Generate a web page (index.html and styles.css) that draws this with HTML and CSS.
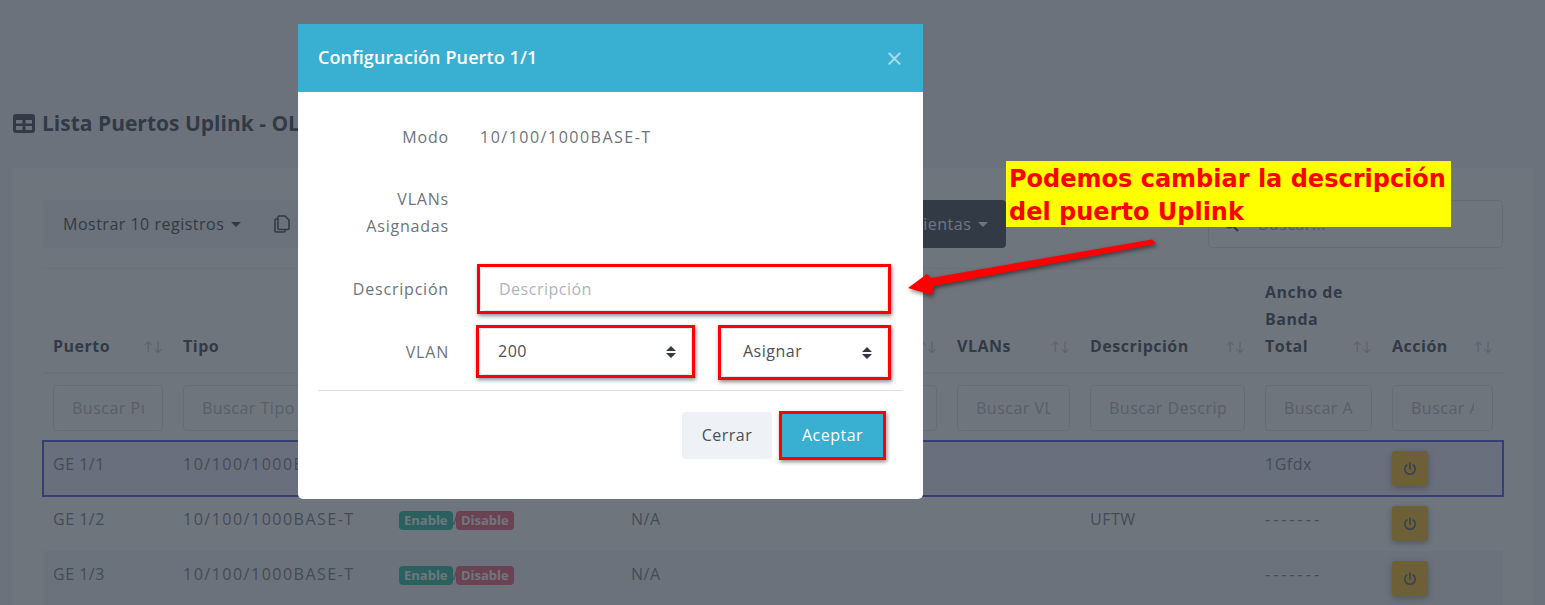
FILE: index.html
```html
<!DOCTYPE html>
<html lang="es">
<head>
  <meta charset="UTF-8">
  <title>Lista Puertos Uplink</title>
  <link rel="stylesheet" href="styles.css">
</head>
<body>
  <div class="page">
    <h4 class="page-title">
      <svg class="title-icon" viewBox="0 0 22 19"><path fill-rule="evenodd" d="M3 0h16a3 3 0 0 1 3 3v13a3 3 0 0 1-3 3H3a3 3 0 0 1-3-3V3a3 3 0 0 1 3-3zM3 6v3.500h6.500V6zm9.500 0v3.500H19V6zM3 12v4h6.500v-4zm9.500 0v4H19v-4z"/></svg>
      Lista Puertos Uplink - OLT 1
    </h4>

    <div class="card">
      <div class="toolbar">
        <div class="btn-group">
          <button class="tool-btn tool-length">Mostrar 10 registros <span class="caret"></span></button>
          <button class="tool-btn tool-icon">
            <svg viewBox="0 0 16 18" width="16" height="18" fill="none" stroke="currentColor" stroke-width="1.600"><path d="M5 1h6l4 4v8.500a1 1 0 0 1-1 1H5a1 1 0 0 1-1-1V2a1 1 0 0 1 1-1z"/><path d="M4 4H2a1 1 0 0 0-1 1v11a1 1 0 0 0 1 1h8a1 1 0 0 0 1-1v-1.500"/></svg>
          </button>
          <div class="tool-fill"></div>
          <button class="tool-btn tool-dark">Herramientas <span class="caret"></span></button>
        </div>
        <div class="search-box">
          <svg viewBox="0 0 16 16" width="16" height="16" fill="none" stroke="currentColor" stroke-width="2.200"><circle cx="6.500" cy="6.500" r="5"/><path d="M10.500 10.500L15 15"/></svg>
          <span>Buscar...</span>
        </div>
      </div>

      <table class="ports">
        <colgroup>
          <col class="c-puerto"><col class="c-tipo"><col class="c-estado"><col class="c-modo">
          <col class="c-vlans"><col class="c-desc"><col class="c-ancho"><col class="c-accion">
        </colgroup>
        <thead>
          <tr>
            <th><div class="th-in">Puerto <span class="sort">↑↓</span></div></th>
            <th><div class="th-in">Tipo <span class="sort">↑↓</span></div></th>
            <th><div class="th-in"><span></span> <span class="sort">↑↓</span></div></th>
            <th><div class="th-in"><span></span> <span class="sort">↑↓</span></div></th>
            <th><div class="th-in">VLANs <span class="sort">↑↓</span></div></th>
            <th><div class="th-in">Descripción <span class="sort">↑↓</span></div></th>
            <th><div class="th-in"><span>Ancho de<br>Banda<br>Total</span> <span class="sort">↑↓</span></div></th>
            <th><div class="th-in">Acción <span class="sort">↑↓</span></div></th>
          </tr>
          <tr class="filters">
            <td><input placeholder="Buscar Puerto"></td>
            <td><input placeholder="Buscar Tipo"></td>
            <td><input></td>
            <td><input></td>
            <td><input placeholder="Buscar VLANs"></td>
            <td><input placeholder="Buscar Descripción"></td>
            <td><input placeholder="Buscar Ancho"></td>
            <td><input placeholder="Buscar Acción"></td>
          </tr>
        </thead>
        <tbody>
          <tr class="selected">
            <td>GE 1/1</td>
            <td class="wide-num">10/100/1000BASE-T</td>
            <td></td>
            <td></td>
            <td></td>
            <td></td>
            <td>1Gfdx</td>
            <td><button class="power"><svg viewBox="0 0 14 14" width="14" height="14" fill="none" stroke="currentColor" stroke-width="1.600" stroke-linecap="round"><path d="M7 1v6"/><path d="M3.800 3a5.200 5.200 0 1 0 6.400 0"/></svg></button></td>
          </tr>
          <tr>
            <td>GE 1/2</td>
            <td class="wide-num">10/100/1000BASE-T</td>
            <td><span class="badge green">Enable</span>/<span class="badge red">Disable</span></td>
            <td>N/A</td>
            <td></td>
            <td>UFTW</td>
            <td class="dashes">-------</td>
            <td><button class="power"><svg viewBox="0 0 14 14" width="14" height="14" fill="none" stroke="currentColor" stroke-width="1.600" stroke-linecap="round"><path d="M7 1v6"/><path d="M3.800 3a5.200 5.200 0 1 0 6.400 0"/></svg></button></td>
          </tr>
          <tr class="striped">
            <td>GE 1/3</td>
            <td class="wide-num">10/100/1000BASE-T</td>
            <td><span class="badge green">Enable</span>/<span class="badge red">Disable</span></td>
            <td>N/A</td>
            <td></td>
            <td></td>
            <td class="dashes">-------</td>
            <td><button class="power"><svg viewBox="0 0 14 14" width="14" height="14" fill="none" stroke="currentColor" stroke-width="1.600" stroke-linecap="round"><path d="M7 1v6"/><path d="M3.800 3a5.200 5.200 0 1 0 6.400 0"/></svg></button></td>
          </tr>
        </tbody>
      </table>
    </div>
  </div>

  <div class="backdrop"></div>

  <div class="modal">
    <div class="modal-header">
      <h5>Configuración Puerto 1/1</h5>
      <span class="close">×</span>
    </div>
    <div class="modal-body">
      <div class="form-grid">
        <label class="row-modo">Modo</label>
        <div class="row-modo wide-num">10/100/1000BASE-T</div>
        <label class="row-vlans">VLANs<br>Asignadas</label>
        <div class="row-vlans"></div>
        <label class="row-desc">Descripción</label>
        <div class="marked mark-desc row-desc"><input class="field" placeholder="Descripción"></div>
        <label>VLAN</label>
        <div class="vlan-row">
          <div class="marked mark-vlan"><select class="field"><option>200</option></select></div>
          <div class="marked mark-asig"><select class="field"><option>Asignar</option></select></div>
        </div>
      </div>
      <hr>
      <div class="modal-footer">
        <button class="btn-close">Cerrar</button>
        <div class="marked mark-ok"><button class="btn-ok">Aceptar</button></div>
      </div>
    </div>
  </div>

  <!-- anotacion sobre la captura -->
  <div class="note">Podemos cambiar la descripción<br>del puerto Uplink</div>
  <svg class="note-arrow" viewBox="0 0 270 70" width="270" height="70">
    <path d="M252 11.500L256 16 34 58 32 67 8 60 27 46 31 50z" fill="#f00"/>
  </svg>
</body>
</html>
```

FILE: styles.css
```css
html, body {
  margin: 0;
  height: 605px;
  overflow: hidden;
}
body {
  font-family: "Open Sans", "Lato", sans-serif;
  font-size: 16px;
  line-height: 27px;
  letter-spacing: 0.5px;
  color: #6c757d;
  background-color: #f5f6f8;
}
.wide-num {
  letter-spacing: 1.5px;
}
.page {
  padding: 109px 12px 0 13px;
}
.page-title {
  margin: 0 0 30px;
  font-size: 21px;
  line-height: 29px;
  font-weight: 700;
  letter-spacing: 0;
  color: #323a46;
  display: flex;
  align-items: center;
  gap: 7px;
  white-space: nowrap;
}
.title-icon {
  width: 22px;
  height: 19px;
  fill: #323a46;
}
.card {
  background-color: #fff;
  padding: 32px 30px;
}

/* barra de botones */
.toolbar {
  display: flex;
  justify-content: space-between;
  padding-bottom: 20px;
  border-bottom: 1px solid #eef0f3;
}
.btn-group {
  display: flex;
  width: 963px;
  height: 48px;
}
.tool-btn {
  font: inherit;
  letter-spacing: inherit;
  border: none;
  background-color: #f1f3f7;
  color: #323a46;
  padding: 0 20px;
}
.tool-length {
  padding-right: 13px;
  border-radius: 4px 0 0 4px;
  white-space: nowrap;
}
.tool-icon {
  display: flex;
  align-items: center;
}
.tool-fill {
  flex: 1;
  background-color: #f1f3f7;
}
.tool-dark {
  padding-right: 18px;
  background-color: #323a46;
  color: #fff;
  border-radius: 0 4px 4px 0;
  white-space: nowrap;
}
.caret {
  display: inline-block;
  margin-left: 2px;
  vertical-align: 3px;
  border-top: 5px solid currentColor;
  border-left: 5px solid transparent;
  border-right: 5px solid transparent;
}
.search-box {
  box-sizing: border-box;
  width: 295px;
  height: 48px;
  border: 1px solid #dee2e6;
  border-radius: 4px;
  display: flex;
  align-items: center;
  gap: 19px;
  padding-left: 14px;
  color: #323a46;
}
.search-box span {
  color: #98a6ad;
}

/* tabla */
.ports {
  width: 1460px;
  table-layout: fixed;
  border-collapse: collapse;
}
.c-puerto { width: 130px; }
.c-tipo { width: 217px; }
.c-estado { width: 231px; }
.c-modo { width: 326px; }
.c-vlans { width: 133px; }
.c-desc { width: 175px; }
.c-ancho { width: 127px; }
.c-accion { width: 121px; }
.ports th {
  padding: 10px 10px 12px;
  text-align: left;
  vertical-align: bottom;
  color: #323a46;
  font-weight: 700;
  border-bottom: 2px solid #eef0f3;
}
.th-in {
  display: flex;
  justify-content: space-between;
  align-items: flex-end;
}
.sort {
  color: #b8bec5;
  font-size: 13px;
  font-weight: 400;
  letter-spacing: 0;
  flex: none;
}
.ports td {
  padding: 10px;
  height: 35px;
  vertical-align: top;
}
.ports .filters td {
  padding-top: 11px;
}
.filters input {
  box-sizing: border-box;
  width: 100%;
  height: 46px;
  padding: 0 18px;
  border: 1px solid #dee2e6;
  border-radius: 4px;
  font: inherit;
  letter-spacing: inherit;
  background: transparent;
}
.filters input::placeholder,
.field::placeholder {
  color: #adb5bd;
  opacity: 1;
}
.selected {
  background-color: #eceafc;
  outline: 2px solid #3c4bd8;
  outline-offset: -1px;
}
.striped {
  background-color: #f1f3f7;
}
.dashes {
  letter-spacing: 3px;
}
.badge {
  display: inline-block;
  padding: 0 5px;
  border-radius: 4px;
  font-size: 13px;
  line-height: 19px;
  font-weight: 700;
  letter-spacing: 0;
  color: #fff;
}
.green {
  margin-left: -1px;
  background-color: #1abc9c;
}
.red {
  margin-left: -3px;
  background-color: #f1556c;
}
.power {
  display: flex;
  align-items: center;
  justify-content: center;
  width: 36px;
  height: 35px;
  padding: 0;
  border: none;
  border-radius: 3px;
  background-color: #f9b914;
  color: #3f5080;
  box-shadow: 0 2px 6px rgba(60, 60, 40, 0.5);
}

/* modal */
.backdrop {
  position: fixed;
  inset: 0;
  background-color: #323a46;
  opacity: 0.7;
}
.modal {
  position: fixed;
  left: 298px;
  top: 24px;
  width: 625px;
  height: 475px;
  background-color: #fff;
  border-radius: 0 0 5px 5px;
}
.modal-header {
  box-sizing: border-box;
  height: 68px;
  padding: 0 20px 2px;
  background-color: #39afd1;
  color: #fff;
  display: flex;
  align-items: center;
  justify-content: space-between;
}
.modal-header h5 {
  margin: 0;
  font-size: 18px;
  font-weight: 600;
  letter-spacing: 0.1px;
}
.close {
  font-size: 29px;
  font-weight: 400;
  color: #a8dcea;
}
.modal-body {
  padding: 32px 20px 0;
}
.form-grid {
  display: grid;
  grid-template-columns: 131px 427px;
  column-gap: 27px;
  align-items: center;
}
.form-grid label {
  text-align: right;
  letter-spacing: 0.8px;
}
.form-grid .row-modo {
  margin-bottom: 35px;
}
.form-grid div.row-modo {
  padding-left: 4px;
}
.form-grid .row-vlans {
  margin-bottom: 24px;
}
.form-grid .row-desc {
  margin-bottom: 11px;
}
.marked {
  box-sizing: border-box;
  border: 3px solid #f00;
  box-shadow: 1px 2px 4px rgba(0, 0, 0, 0.45);
}
.mark-desc {
  width: 414px;
  height: 50px;
  margin-left: 1px;
}
.vlan-row {
  display: flex;
  gap: 23px;
  align-items: flex-start;
}
.mark-vlan {
  width: 219px;
  height: 53px;
}
.mark-asig {
  width: 173px;
  height: 55px;
}
.field {
  box-sizing: border-box;
  display: block;
  width: 100%;
  height: 100%;
  padding: 0 0 0 18px;
  border: 1px solid #e3e6ea;
  border-radius: 4px;
  font: inherit;
  letter-spacing: inherit;
  color: #495057;
  background-color: #fff;
  appearance: none;
  outline: none;
}
.mark-asig .field {
  padding: 0 0 2px 21px;
}
select.field {
  background-image: url("data:image/svg+xml,%3Csvg xmlns='http://www.w3.org/2000/svg' width='10' height='14'%3E%3Cpath fill='%23323a46' d='M5 1l5 5H0zM5 13L0 8h10z'/%3E%3C/svg%3E");
  background-repeat: no-repeat;
  background-position: right 15px center;
}
hr {
  margin: 10px 0 0;
  border: none;
  border-top: 1px solid #dee2e6;
}
.modal-footer {
  display: flex;
  justify-content: flex-end;
  align-items: center;
  gap: 7px;
  padding: 20px 17px 0 0;
}
.btn-close {
  width: 90px;
  height: 47px;
  border: none;
  border-radius: 4px;
  font: inherit;
  letter-spacing: inherit;
  color: #495057;
  background-color: #eef1f6;
}
.mark-ok {
  width: 107px;
  height: 49px;
}
.btn-ok {
  display: block;
  width: 100%;
  height: 100%;
  border: none;
  font: inherit;
  letter-spacing: inherit;
  color: #fff;
  background-color: #39afd1;
}

/* anotacion */
.note {
  position: fixed;
  left: 1006px;
  top: 161px;
  width: 445px;
  height: 66px;
  box-sizing: border-box;
  padding: 2px 0 0 3px;
  background-color: #ff0;
  color: #f00;
  font-family: "DejaVu Sans", sans-serif;
  font-weight: 700;
  font-size: 24px;
  line-height: 33px;
  letter-spacing: 0;
  white-space: nowrap;
}
.note-arrow {
  position: fixed;
  left: 900px;
  top: 228px;
  filter: drop-shadow(1px 2px 2px rgba(0, 0, 0, 0.5));
}
```
